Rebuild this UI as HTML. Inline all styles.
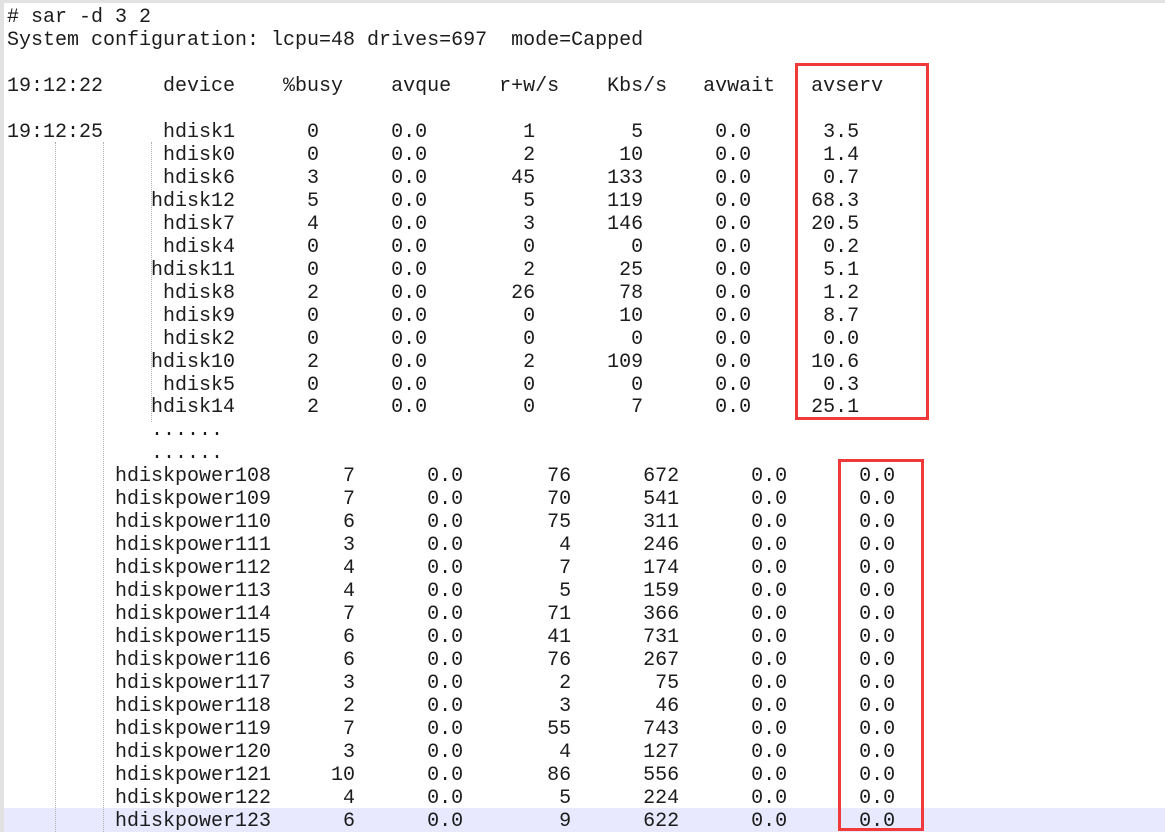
<!DOCTYPE html>
<html><head><meta charset="utf-8"><style>
html,body{margin:0;padding:0;width:1165px;height:832px;overflow:hidden;background:#fff;position:relative}
.gut{position:absolute;left:0;top:0;width:4px;height:832px;background:#e2e2e2}
.topb{position:absolute;left:0;top:0;width:1165px;height:3px;background:#e2e2e2}
.hl{position:absolute;left:4px;top:808px;width:1161px;height:24px;background:#e8e8ff}
.dl{position:absolute;width:0;border-left:1px dotted #b0b0b0}
pre{position:absolute;left:7px;top:7px;margin:0;font-family:"Liberation Mono",monospace;font-size:20px;line-height:22.97px;color:#1c1c1c}
.box{position:absolute;border:3px solid #f03a3a;box-sizing:border-box}
</style></head><body>
<div class="topb"></div><div class="gut"></div>
<div class="hl"></div>
<div class="dl" style="left:55px;top:142px;height:690px"></div>
<div class="dl" style="left:103px;top:142px;height:690px"></div>
<div class="dl" style="left:151px;top:142px;height:280px"></div>
<pre># sar -d 3 2
System configuration: lcpu=48 drives=697  mode=Capped

19:12:22     device    %busy    avque    r+w/s    Kbs/s   avwait   avserv

19:12:25     hdisk1      0      0.0        1        5      0.0      3.5
             hdisk0      0      0.0        2       10      0.0      1.4
             hdisk6      3      0.0       45      133      0.0      0.7
            hdisk12      5      0.0        5      119      0.0     68.3
             hdisk7      4      0.0        3      146      0.0     20.5
             hdisk4      0      0.0        0        0      0.0      0.2
            hdisk11      0      0.0        2       25      0.0      5.1
             hdisk8      2      0.0       26       78      0.0      1.2
             hdisk9      0      0.0        0       10      0.0      8.7
             hdisk2      0      0.0        0        0      0.0      0.0
            hdisk10      2      0.0        2      109      0.0     10.6
             hdisk5      0      0.0        0        0      0.0      0.3
            hdisk14      2      0.0        0        7      0.0     25.1
            ......
            ......
         hdiskpower108      7      0.0       76      672      0.0      0.0
         hdiskpower109      7      0.0       70      541      0.0      0.0
         hdiskpower110      6      0.0       75      311      0.0      0.0
         hdiskpower111      3      0.0        4      246      0.0      0.0
         hdiskpower112      4      0.0        7      174      0.0      0.0
         hdiskpower113      4      0.0        5      159      0.0      0.0
         hdiskpower114      7      0.0       71      366      0.0      0.0
         hdiskpower115      6      0.0       41      731      0.0      0.0
         hdiskpower116      6      0.0       76      267      0.0      0.0
         hdiskpower117      3      0.0        2       75      0.0      0.0
         hdiskpower118      2      0.0        3       46      0.0      0.0
         hdiskpower119      7      0.0       55      743      0.0      0.0
         hdiskpower120      3      0.0        4      127      0.0      0.0
         hdiskpower121     10      0.0       86      556      0.0      0.0
         hdiskpower122      4      0.0        5      224      0.0      0.0
         hdiskpower123      6      0.0        9      622      0.0      0.0</pre>
<div class="box" style="left:795px;top:63px;width:134px;height:357px"></div>
<div class="box" style="left:838px;top:459px;width:86px;height:372px"></div>
</body></html>
